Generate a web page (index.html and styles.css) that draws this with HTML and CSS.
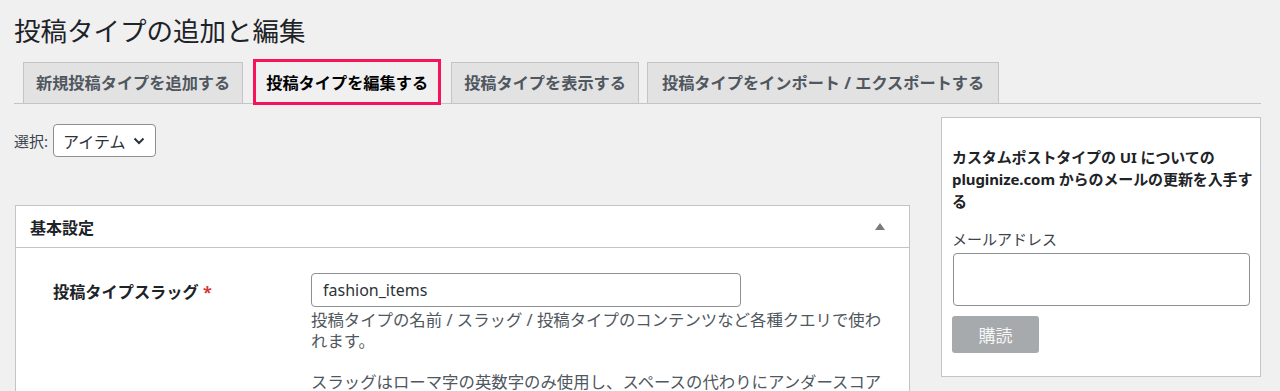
FILE: index.html
```html
<!DOCTYPE html>
<html lang="ja">
<head>
    <meta charset="UTF-8">
    <meta name="viewport" content="width=device-width, initial-scale=1.0">
    <title>投稿タイプの追加と編集</title>
    <link rel="stylesheet" href="styles.css">
</head>
<body>
    <div class="wrap">
        <h1>投稿タイプの追加と編集</h1>

        <nav class="tabs">
            <a class="tab">新規投稿タイプを追加する</a>
            <a class="tab active">投稿タイプを編集する</a>
            <a class="tab">投稿タイプを表示する</a>
            <a class="tab">投稿タイプをインポート / エクスポートする</a>
        </nav>

        <div class="columns">
            <div class="main">
                <div class="picker">
                    <label>選択:</label>
                    <div class="select">
                        <span>アイテム</span>
                        <svg width="12" height="8" viewBox="0 0 12 8"><path d="M1.5 1.5 6 6l4.5-4.5" fill="none" stroke="#2c3338" stroke-width="2"/></svg>
                    </div>
                </div>

                <div class="postbox">
                    <div class="postbox-head">
                        <h2>基本設定</h2>
                        <span class="toggle"></span>
                    </div>
                    <div class="postbox-body">
                        <div class="row">
                            <div class="row-label">投稿タイプスラッグ <span class="req">*</span></div>
                            <div class="row-field">
                                <input type="text" class="text-input" value="fashion_items">
                                <p class="desc">投稿タイプの名前 / スラッグ / 投稿タイプのコンテンツなど各種クエリで使われます。<br><br>スラッグはローマ字の英数字のみ使用し、スペースの代わりにアンダースコアを使用してください。</p>
                            </div>
                        </div>
                    </div>
                </div>
            </div>

            <aside class="sidebar">
                <h3>カスタムポストタイプの UI についての pluginize.com からのメールの更新を入手する</h3>
                <label class="email-label">メールアドレス</label>
                <input type="email" class="email-input">
                <button class="subscribe" disabled>購読</button>
            </aside>
        </div>
    </div>
</body>
</html>
```
FILE: styles.css
```css
body { margin: 0; background: #f0f0f1; color: #3c434a; font-family: "Noto Sans", "Noto Sans CJK JP", sans-serif; }
.wrap { width: 1247px; padding-left: 14px; }

h1 { margin: 13px 0 0; font-size: 26.5px; line-height: 36px; font-weight: 400; color: #1d2327; }

.tabs { display: flex; align-items: flex-end; margin-top: 10px; padding-left: 9px; border-bottom: 1px solid #c3c4c7; }
.tab { margin-right: 8px; padding: 6px 12px; border: 1px solid #c3c4c7; border-bottom: none; background: #e2e2e3; color: #50575e; font-size: 16.2px; line-height: 28px; font-weight: 700; white-space: nowrap; }
.tab:last-child { padding: 6px 14px; }
.tab.active { padding: 7px 10px 5px; border: 3px solid #f5145c; margin: 0 10px -2px 2px; background: #f0f0f1; color: #000; }

.columns { display: flex; gap: 31px; margin-top: 13px; }
.main { width: 896px; padding-top: 7px; }

.picker { display: flex; align-items: center; gap: 5px; font-size: 15px; }
.picker label { color: #3c434a; }
.select { display: flex; align-items: center; gap: 8px; box-sizing: border-box; width: 103px; height: 33px; padding: 0 8px 0 9px; border: 1px solid #8c8f94; border-radius: 4px; background: #fff; color: #2c3338; font-size: 16px; white-space: nowrap; }

.postbox { margin-top: 48px; margin-left: 1px; border: 1px solid #c3c4c7; background: #fff; }
.postbox-head { display: flex; align-items: center; justify-content: space-between; height: 41px; padding: 0 24px 0 14px; border-bottom: 1px solid #c3c4c7; }
.postbox-head h2 { margin: 0; font-size: 16px; font-weight: 700; color: #1d2327; }
.toggle { width: 0; height: 0; border-left: 5px solid transparent; border-right: 5px solid transparent; border-bottom: 7px solid #787c82; }

.postbox-body { padding: 25px 0 0 37px; }
.row { display: flex; }
.row-label { width: 258px; padding-top: 7px; font-size: 16.2px; line-height: 24px; font-weight: 700; color: #1d2327; }
.req { color: #d63638; }
.row-field { width: 580px; }
.text-input { display: block; box-sizing: border-box; width: 430px; height: 34px; margin: 0; padding: 0 11px; border: 1px solid #8c8f94; border-radius: 4px; font-family: inherit; font-size: 16px; color: #2c3338; }
.desc { margin: 3px 0 0; font-size: 16.4px; line-height: 20.5px; color: #50575e; }

.sidebar { box-sizing: border-box; width: 320px; height: 260px; padding: 28px 4px 0 10px; border: 1px solid #c3c4c7; background: #fff; }
.sidebar h3 { margin: 0; font-size: 15px; line-height: 22px; font-weight: 700; color: #1d2327; letter-spacing: -0.1px; }
.email-label { display: block; margin-top: 16px; font-size: 15px; line-height: 22px; color: #3c434a; }
.email-input { display: block; box-sizing: border-box; width: 297px; height: 53px; margin: 3px 0 0 1px; border: 1px solid #8c8f94; border-radius: 4px; }
.subscribe { display: block; width: 87px; height: 37px; margin-top: 10px; border: none; border-radius: 3px; background: #a7aaad; color: #f6f7f7; font-family: inherit; font-size: 17px; }
```
